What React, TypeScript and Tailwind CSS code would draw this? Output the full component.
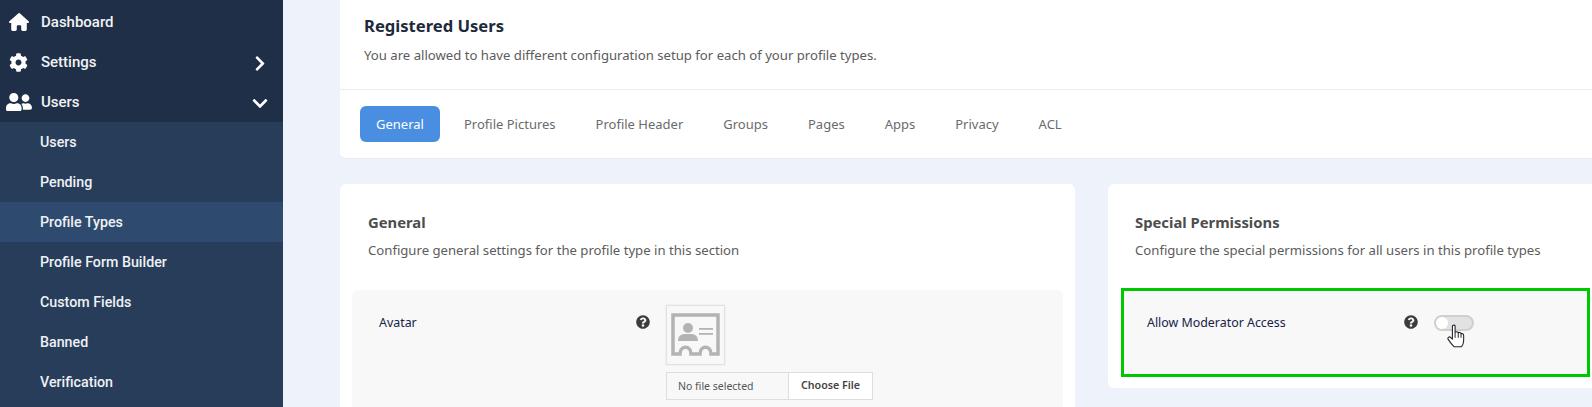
import { FaCog, FaUserFriends, FaChevronRight, FaChevronDown, FaQuestionCircle } from "react-icons/fa";
import { FaHouse } from "react-icons/fa6";

const ROBOTO = "font-['Roboto',sans-serif]";

function MainItem({ icon, label, chevron }: { icon: React.ReactNode; label: string; chevron?: React.ReactNode }) {
  return (
    <div className="flex h-10 items-center text-white">
      <div className="flex w-[41px] shrink-0 justify-center pr-[4px] text-[20px]">{icon}</div>
      <span className="text-[15px] font-medium text-[#f1f3f6]">{label}</span>
      {chevron && <div className="ml-auto mr-[15px] flex w-[16px] justify-center pt-[2px] text-[17px]">{chevron}</div>}
    </div>
  );
}

function SubItem({ label, active }: { label: string; active?: boolean }) {
  return (
    <div className={`flex h-10 items-center pl-[40px] pt-[2px] text-[14.25px] font-medium text-[#eef1f5] ${active ? "bg-[#2e4a6e]" : ""}`}>
      {label}
    </div>
  );
}

function Help() {
  return <FaQuestionCircle className="text-[14px] text-[#3c3c3c]" />;
}

function AvatarIcon() {
  return (
    <svg width="50" height="44" viewBox="0 0 50 44" fill="none">
      <path d="M2 2 H47 V41 H40 C40 32 29 32 29 41 H20 C20 32 9 32 9 41 H2 Z" stroke="#b3b3b3" strokeWidth="3.5" />
      <circle cx="17" cy="15" r="5" fill="#b3b3b3" />
      <path d="M7 28 C7 21 12 21 17 21 C22 21 27 21 27 28 Z" fill="#b3b3b3" />
      <rect x="28" y="15" width="14" height="1.8" fill="#b3b3b3" />
      <rect x="28" y="20" width="14" height="1.8" fill="#b3b3b3" />
    </svg>
  );
}

function HandCursor() {
  return (
    <svg width="18" height="24" viewBox="0 0 20 26" className="absolute left-[11px] top-[7px]">
      <path
        d="M6 2 C6 0.6 9 0.6 9 2 V9 C10 8 12 8 12.5 9.5 C13.5 8.6 15.3 9 15.6 10.5 C16.8 10 18.5 10.6 18.5 12.5 V18 C18.5 21 17 24 16 25 H8 C6 23 3.5 20 1.5 17 C0 15 2.5 13 4 14.5 L6 16.5 Z"
        fill="#fff"
        stroke="#20242c"
        strokeWidth="1.2"
        strokeLinejoin="round"
      />
      <path d="M9 9.5 V15 M12.5 9.5 V15 M15.6 10.5 V15" stroke="#20242c" strokeWidth="1.1" fill="none" />
    </svg>
  );
}

const tabs = ["Profile Pictures", "Profile Header", "Groups", "Pages", "Apps", "Privacy", "ACL"];

export default function App() {
  return (
    <div className="flex h-[407px] w-[1592px] overflow-hidden bg-[#eef3fb] font-['Noto_Sans',sans-serif]">
      <aside className={`w-[283px] shrink-0 bg-[#1f2f47] pt-[2px] ${ROBOTO}`}>
        <MainItem icon={<FaHouse className="text-[20px]" />} label="Dashboard" />
        <MainItem icon={<FaCog className="text-[19px]" />} label="Settings" chevron={<FaChevronRight />} />
        <MainItem icon={<FaUserFriends className="text-[26px]" />} label="Users" chevron={<FaChevronDown />} />
        <div className="bg-[#283d5a] pb-10">
          <SubItem label="Users" />
          <SubItem label="Pending" />
          <SubItem label="Profile Types" active />
          <SubItem label="Profile Form Builder" />
          <SubItem label="Custom Fields" />
          <SubItem label="Banned" />
          <SubItem label="Verification" />
        </div>
      </aside>

      <main className="min-w-0 flex-1 pl-[57px]">
        <section className="h-[159px] w-[1300px] rounded-b-[6px] border-b border-[#e9ecf0] bg-white">
          <div className="h-[90px] border-b border-[#ececec] pl-[24px] pt-[13px]">
            <h1 className="text-[16.6px] font-bold leading-[26px] text-[#1e2a3c]">Registered Users</h1>
            <p className="mt-[6px] text-[13.15px] leading-[20px] text-[#5c5c5c]">
              You are allowed to have different configuration setup for each of your profile types.
            </p>
          </div>
          <nav className="flex items-center pl-[20px] pt-[16px] text-[13px] text-[#6b6b6b]">
            <div className="flex h-[36px] w-[80px] items-center justify-center rounded-[6px] bg-[#4a8ee2] pt-[1px] text-white">General</div>
            <div className="ml-[24px] flex gap-[40px] pt-[1px]">
              {tabs.map((t) => (
                <span key={t}>{t}</span>
              ))}
            </div>
          </nav>
        </section>

        <div className="mt-[25px] flex gap-[33px]">
          <section className="h-[300px] w-[735px] shrink-0 rounded-[6px] bg-white pl-[12px] pr-[12px]">
            <div className="pl-[16px] pt-[27px]">
              <h2 className="text-[14.8px] font-bold leading-[22px] text-[#4d4d4d]">General</h2>
              <p className="mt-[7px] text-[13.15px] leading-[20px] text-[#5c5c5c]">Configure general settings for the profile type in this section</p>
            </div>
            <div className="mt-[30px] flex h-[200px] rounded-[6px] bg-[#f8f8f8] pl-[27px] pt-[24px]">
              <div className="w-[257px] text-[12.4px] leading-[18px] text-[#16224a]">Avatar</div>
              <div className="pt-[1px]"><Help /></div>
              <div className="ml-[16px] -mt-[9px]">
                <div className="flex h-[60px] w-[59px] items-center justify-center border border-[#e2e2e2] shadow-[0_0_1px_#ccc]">
                  <AvatarIcon />
                </div>
                <div className="mt-[7px] flex h-[28px] w-[207px] border border-[#dedede] pt-0">
                  <div className="flex w-[121px] items-center pl-[11px] pt-[1px] text-[10.5px] text-[#555]">No file selected</div>
                  <div className="flex flex-1 items-center justify-center border-l border-[#dedede] bg-white pb-[1px] text-[10.7px] font-semibold text-[#444]">Choose File</div>
                </div>
              </div>
            </div>
          </section>

          <section className="h-[204px] w-[600px] shrink-0 rounded-[6px] bg-white pl-[13px]">
            <div className="pl-[14px] pt-[27px]">
              <h2 className="text-[14.8px] font-bold leading-[22px] text-[#4d4d4d]">Special Permissions</h2>
              <p className="mt-[7px] text-[13.15px] leading-[20px] text-[#5c5c5c]">Configure the special permissions for all users in this profile types</p>
            </div>
            <div className="mt-[28px] flex h-[89px] w-[469px] border-[3px] border-[#00c800] bg-[#f8f8f8] pl-[23px] pt-[23px]">
              <div className="w-[257px] text-[12.4px] leading-[18px] text-[#16224a]">Allow Moderator Access</div>
              <div className="pt-[1px]"><Help /></div>
              <div className="relative ml-[16px] mt-[1px] h-[16px] w-[40px] rounded-full border-2 border-[#cfcfcf] bg-[#e2e2e2]">
                <div className="absolute left-[0px] top-[0px] h-[12px] w-[12px] rounded-full bg-white" />
                <HandCursor />
              </div>
            </div>
          </section>
        </div>
      </main>
    </div>
  );
}
